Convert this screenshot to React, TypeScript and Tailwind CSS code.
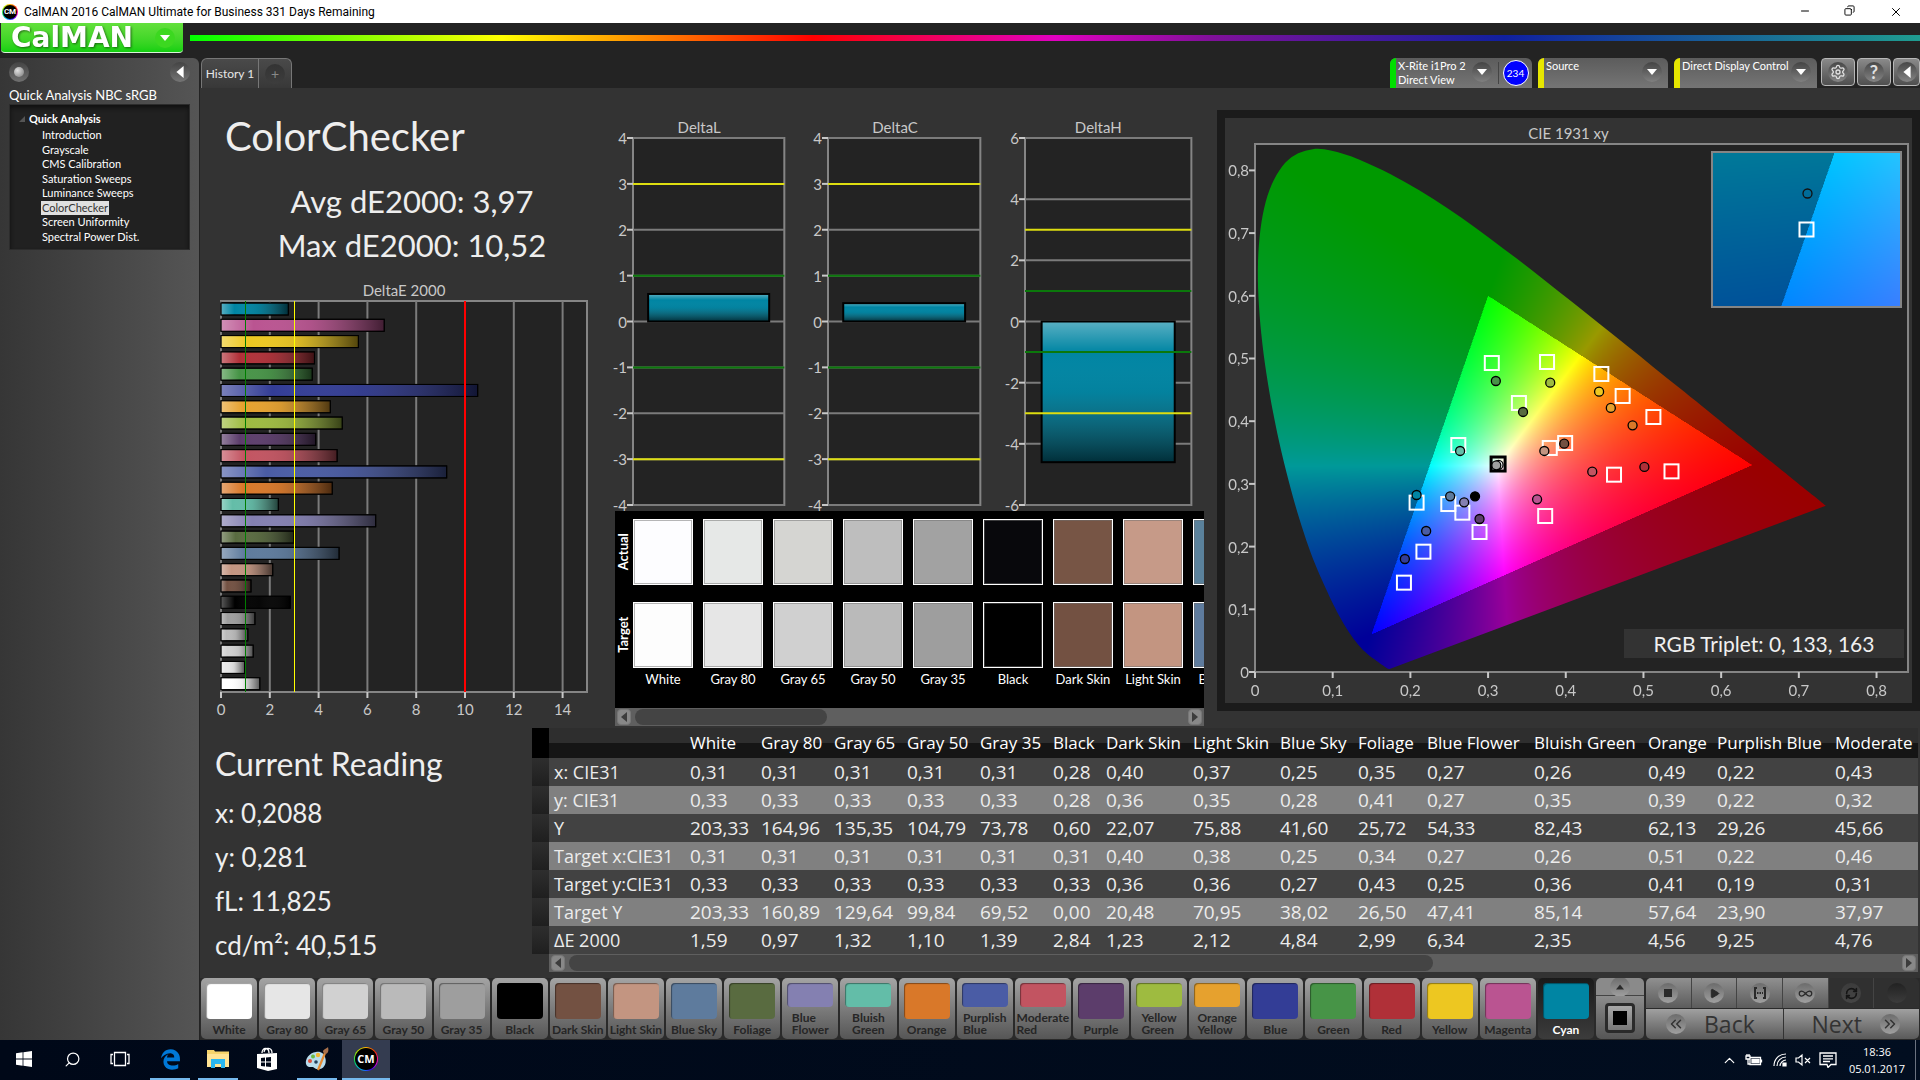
import { useEffect, useRef } from "react";
import type { ReactNode } from "react";
import {
  Settings,
  Play,
  Infinity as InfinityIcon,
  RefreshCw,
  ChevronsLeft,
  ChevronsRight,
  Search,
  Minus,
  Copy,
  X,
  ChevronUp,
} from "lucide-react";
import { FaEdgeLegacy } from "react-icons/fa6";

/* ---------- data ---------- */

type Patch = { name: string; lines?: string[]; color: string; de: number };

const patches: Patch[] = [
  { name: "White", color: "#ffffff", de: 1.59 },
  { name: "Gray 80", color: "#e6e6e6", de: 0.97 },
  { name: "Gray 65", color: "#d1d1d1", de: 1.32 },
  { name: "Gray 50", color: "#bababa", de: 1.1 },
  { name: "Gray 35", color: "#9e9e9e", de: 1.39 },
  { name: "Black", color: "#000000", de: 2.84 },
  { name: "Dark Skin", color: "#735142", de: 1.23 },
  { name: "Light Skin", color: "#c39581", de: 2.12 },
  { name: "Blue Sky", color: "#5e7b9d", de: 4.84 },
  { name: "Foliage", color: "#596b40", de: 2.99 },
  { name: "Blue Flower", lines: ["Blue", "Flower"], color: "#8480b1", de: 6.34 },
  { name: "Bluish Green", lines: ["Bluish", "Green"], color: "#63bda8", de: 2.35 },
  { name: "Orange", color: "#d97829", de: 4.56 },
  { name: "Purplish Blue", lines: ["Purplish", "Blue"], color: "#4a5ca5", de: 9.25 },
  { name: "Moderate Red", lines: ["Moderate", "Red"], color: "#c25461", de: 4.76 },
  { name: "Purple", color: "#5c3d6b", de: 3.88 },
  { name: "Yellow Green", lines: ["Yellow", "Green"], color: "#9ebb40", de: 4.97 },
  { name: "Orange Yellow", lines: ["Orange", "Yellow"], color: "#e6a12e", de: 4.48 },
  { name: "Blue", color: "#333d96", de: 10.52 },
  { name: "Green", color: "#479447", de: 3.74 },
  { name: "Red", color: "#b03038", de: 3.83 },
  { name: "Yellow", color: "#edc721", de: 5.63 },
  { name: "Magenta", color: "#ba5491", de: 6.69 },
  { name: "Cyan", color: "#0085a3", de: 2.76 },
];

const pages = [
  "Introduction",
  "Grayscale",
  "CMS Calibration",
  "Saturation Sweeps",
  "Luminance Sweeps",
  "ColorChecker",
  "Screen Uniformity",
  "Spectral Power Dist.",
];

const columns = [
  "White", "Gray 80", "Gray 65", "Gray 50", "Gray 35", "Black", "Dark Skin", "Light Skin",
  "Blue Sky", "Foliage", "Blue Flower", "Bluish Green", "Orange", "Purplish Blue", "Moderate",
];

const rows: [string, string[]][] = [
  ["x: CIE31", ["0,31", "0,31", "0,31", "0,31", "0,31", "0,28", "0,40", "0,37", "0,25", "0,35", "0,27", "0,26", "0,49", "0,22", "0,43"]],
  ["y: CIE31", ["0,33", "0,33", "0,33", "0,33", "0,33", "0,28", "0,36", "0,35", "0,28", "0,41", "0,27", "0,35", "0,39", "0,22", "0,32"]],
  ["Y", ["203,33", "164,96", "135,35", "104,79", "73,78", "0,60", "22,07", "75,88", "41,60", "25,72", "54,33", "82,43", "62,13", "29,26", "45,66"]],
  ["Target x:CIE31", ["0,31", "0,31", "0,31", "0,31", "0,31", "0,31", "0,40", "0,38", "0,25", "0,34", "0,27", "0,26", "0,51", "0,22", "0,46"]],
  ["Target y:CIE31", ["0,33", "0,33", "0,33", "0,33", "0,33", "0,33", "0,36", "0,36", "0,27", "0,43", "0,25", "0,36", "0,41", "0,19", "0,31"]],
  ["Target Y", ["203,33", "160,89", "129,64", "99,84", "69,52", "0,00", "20,48", "70,95", "38,02", "26,50", "47,41", "85,14", "57,64", "23,90", "37,97"]],
  ["ΔE 2000", ["1,59", "0,97", "1,32", "1,10", "1,39", "2,84", "1,23", "2,12", "4,84", "2,99", "6,34", "2,35", "4,56", "9,25", "4,76"]],
];

const swatches = [
  { name: "White", actual: "#fdfdff", target: "#fdfdfd" },
  { name: "Gray 80", actual: "#e6e8e7", target: "#e6e6e6" },
  { name: "Gray 65", actual: "#d5d5d2", target: "#d0d0d0" },
  { name: "Gray 50", actual: "#bebebe", target: "#bababa" },
  { name: "Gray 35", actual: "#a2a2a2", target: "#9e9e9e" },
  { name: "Black", actual: "#08080c", target: "#000000" },
  { name: "Dark Skin", actual: "#775545", target: "#735142" },
  { name: "Light Skin", actual: "#c69a88", target: "#c39581" },
  { name: "Blue Sky", actual: "#5a819b", target: "#5e7b9d" },
];

/* CIE 1931 2° spectral locus, x then y */
const locus: [number, number][] = [
  [0.1741, 0.005], [0.1733, 0.0048], [0.1714, 0.0051], [0.1689, 0.0069], [0.1644, 0.0109],
  [0.1566, 0.0177], [0.144, 0.0297], [0.1355, 0.0399], [0.1241, 0.0578], [0.1096, 0.0868],
  [0.0913, 0.1327], [0.0687, 0.2007], [0.0454, 0.295], [0.0235, 0.4127], [0.0082, 0.5384],
  [0.0039, 0.6548], [0.0139, 0.7502], [0.0389, 0.812], [0.0743, 0.8338], [0.1142, 0.8262],
  [0.1547, 0.8059], [0.1929, 0.7816], [0.2296, 0.7543], [0.2658, 0.7243], [0.3016, 0.6923],
  [0.3373, 0.6589], [0.3731, 0.6245], [0.4087, 0.5896], [0.4441, 0.5547], [0.4788, 0.5202],
  [0.5125, 0.4866], [0.5448, 0.4544], [0.5752, 0.4242], [0.6029, 0.3965], [0.627, 0.3725],
  [0.6658, 0.334], [0.6915, 0.3083], [0.7079, 0.292], [0.719, 0.2809], [0.726, 0.274],
  [0.73, 0.27], [0.7347, 0.2653],
];

const targets: [number, number][] = [
  [0.3048, 0.4928], [0.3759, 0.4944], [0.4458, 0.4753], [0.4732, 0.4402], [0.5128, 0.4067],
  [0.3397, 0.429], [0.2617, 0.362], [0.3794, 0.3573], [0.3992, 0.3652], [0.4621, 0.3147],
  [0.5361, 0.32], [0.208, 0.2701], [0.2488, 0.2679], [0.2669, 0.2541], [0.3735, 0.2488],
  [0.289, 0.2233], [0.2168, 0.1919], [0.1917, 0.1425],
];

const readings: [number, number, string][] = [
  [0.31, 0.4641, "#479447"], [0.38, 0.4615, "#9ebb40"], [0.4429, 0.4471, "#edc721"],
  [0.458, 0.4211, "#e6a12e"], [0.486, 0.3934, "#d97829"], [0.345, 0.4147, "#596b40"],
  [0.264, 0.3525, "#63bda8"], [0.3724, 0.3525, "#c39581"], [0.398, 0.3642, "#735142"],
  [0.3135, 0.3305, "#ffffff"], [0.3106, 0.3296, "#a0a0a0"], [0.4341, 0.3195, "#c25461"],
  [0.5012, 0.327, "#b03038"], [0.208, 0.2823, "#0085a3"], [0.2512, 0.2802, "#5e7b9d"],
  [0.2692, 0.2706, "#8480b1"], [0.2832, 0.2802, "#000000"], [0.3631, 0.2754, "#ba5491"],
  [0.289, 0.244, "#5c3d6b"], [0.2203, 0.2249, "#4a5ca5"], [0.1929, 0.1802, "#333d96"],
];

/* ---------- chromaticity fill ---------- */

const side = (ax: number, ay: number, bx: number, by: number, x: number, y: number) =>
  (bx - ax) * (y - ay) - (by - ay) * (x - ax);

function insideSRGB(x: number, y: number) {
  return (
    side(0.64, 0.33, 0.3, 0.6, x, y) >= 0 &&
    side(0.3, 0.6, 0.15, 0.06, x, y) >= 0 &&
    side(0.15, 0.06, 0.64, 0.33, x, y) >= 0
  );
}

function xyToRgb(x: number, y: number) {
  const z = 1 - x - y;
  const lin = [
    3.2406 * x - 1.5372 * y - 0.4986 * z,
    -0.9689 * x + 1.8758 * y + 0.0415 * z,
    0.0557 * x - 0.204 * y + 1.057 * z,
  ].map((v) => Math.max(0, v));
  const max = Math.max(...lin, 0.0001);
  const gain = insideSRGB(x, y) ? 255 : 153;
  return lin.map((v) => (v / max) * gain);
}

type Range = { x0: number; x1: number; y0: number; y1: number };

function Chromaticity({ range, clip }: { range: Range; clip: boolean }) {
  const ref = useRef<HTMLCanvasElement>(null);
  useEffect(() => {
    const canvas = ref.current;
    const ctx = canvas?.getContext("2d");
    if (!canvas || !ctx) return;
    const w = (canvas.width = canvas.clientWidth);
    const h = (canvas.height = canvas.clientHeight);
    const { x0, x1, y0, y1 } = range;
    const img = ctx.createImageData(w, h);
    for (let j = 0; j < h; j++) {
      for (let i = 0; i < w; i++) {
        const sum = [0, 0, 0];
        for (const o of [0.25, 0.75]) {
          const c = xyToRgb(x0 + ((i + o) / w) * (x1 - x0), y1 - ((j + 0.5) / h) * (y1 - y0));
          for (let k = 0; k < 3; k++) sum[k] += c[k] / 2;
        }
        const p = (j * w + i) * 4;
        img.data[p] = sum[0];
        img.data[p + 1] = sum[1];
        img.data[p + 2] = sum[2];
        img.data[p + 3] = 255;
      }
    }
    ctx.putImageData(img, 0, 0);
    if (!clip) return;
    const pt = (k: number) => {
      const [x, y] = locus[Math.min(Math.max(k, 0), locus.length - 1)];
      return [((x - x0) / (x1 - x0)) * w, ((y1 - y) / (y1 - y0)) * h];
    };
    ctx.globalCompositeOperation = "destination-in";
    ctx.beginPath();
    ctx.moveTo(pt(0)[0], pt(0)[1]);
    for (let k = 0; k < locus.length - 1; k++) {
      const [a, b, c, d] = [pt(k - 1), pt(k), pt(k + 1), pt(k + 2)];
      ctx.bezierCurveTo(
        b[0] + (c[0] - a[0]) / 6, b[1] + (c[1] - a[1]) / 6,
        c[0] - (d[0] - b[0]) / 6, c[1] - (d[1] - b[1]) / 6,
        c[0], c[1],
      );
    }
    ctx.closePath();
    ctx.fill();
  }, [range, clip]);
  return <canvas ref={ref} className="absolute inset-0 h-full w-full" />;
}

const cieRange: Range = { x0: 0, x1: 0.8405, y0: 0, y1: 0.8421 };
const insetRange: Range = { x0: 0.1836, x1: 0.2324, y0: 0.2452, y1: 0.295 };

/* ---------- charts ---------- */

const label = "fill-[#c8c8c8] font-['Lato',sans-serif] text-[15px]";

function DeltaEChart() {
  const bars = [...patches].reverse();
  return (
    <figure className="mt-3.5 mr-[27px] ml-[21px]">
      <figcaption className="text-center text-[15px] leading-[18px] text-[#c8c8c8]">DeltaE 2000</figcaption>
      <svg className="mt-0.5 block h-[391px] w-full overflow-visible" role="img" aria-label="DeltaE 2000 per patch">
        <defs>
          <linearGradient id="shadeX">
            <stop offset="0" stopColor="#fff" stopOpacity="0.35" />
            <stop offset="0.2" stopColor="#fff" stopOpacity="0" />
            <stop offset="0.55" stopColor="#444" stopOpacity="0.1" />
            <stop offset="1" stopColor="#000" stopOpacity="0.65" />
          </linearGradient>
        </defs>
        <rect width="100%" height="100%" fill="#232323" stroke="#858585" strokeWidth="2" />
        {[0, 2, 4, 6, 8, 10, 12, 14].map((v) => {
          const x = `${(v / 15) * 100}%`;
          return (
            <g key={v}>
              <line x1={x} x2={x} y1="0" y2="100%" stroke="#7b7b7b" strokeWidth="2" />
              <svg x={x} y="100%" className="overflow-visible">
                <line y1="0" y2="6" stroke="#c8c8c8" strokeWidth="2" />
                <text y="23" textAnchor="middle" className={label}>{v}</text>
              </svg>
            </g>
          );
        })}
        {bars.map((p, i) => (
          <svg key={p.name} y={`${(i / 24) * 100}%`} width={`${(p.de / 15) * 100}%`} className="overflow-visible">
            <rect y="2" width="100%" height="12" fill={p.color} stroke="#000" />
            <rect y="2" width="100%" height="12" fill="url(#shadeX)" stroke="#000" />
          </svg>
        ))}
        <g shapeRendering="crispEdges">
          <line x1="6.667%" x2="6.667%" y1="0" y2="100%" stroke="#007d00" />
          <line x1="20%" x2="20%" y1="0" y2="100%" stroke="#ffff00" />
          <line x1="66.667%" x2="66.667%" y1="0" y2="100%" stroke="#ff0000" strokeWidth="2" />
        </g>
      </svg>
    </figure>
  );
}

function DeltaChart({ title, max, step, value }: { title: string; max: number; step: number; value: number }) {
  const pos = (v: number) => `${((max - v) / (2 * max)) * 100}%`;
  const ticks = Array.from({ length: (2 * max) / step + 1 }, (_, i) => max - i * step);
  const top = Math.max(value, 0);
  return (
    <figure>
      <figcaption className="text-center text-[15px] leading-[18px] text-[#c8c8c8]">{title}</figcaption>
      <div className="mt-0.5 pl-[19px]">
        <svg className="block h-[367px] w-full overflow-visible" role="img" aria-label={title}>
          <defs>
            <linearGradient id={`shade${title}`} x1="0" x2="0" y1="0" y2="1">
              <stop offset="0" stopColor="#fff" stopOpacity="0.35" />
              <stop offset="0.22" stopColor="#fff" stopOpacity="0" />
              <stop offset="0.5" stopColor="#444" stopOpacity="0.05" />
              <stop offset="1" stopColor="#000" stopOpacity="0.65" />
            </linearGradient>
          </defs>
          <rect width="100%" height="100%" fill="#232323" stroke="#858585" strokeWidth="2" />
          {ticks.map((v) => (
            <g key={v}>
              <line x1="0" x2="100%" y1={pos(v)} y2={pos(v)} stroke="#7b7b7b" strokeWidth="2" />
              <svg y={pos(v)} className="overflow-visible">
                <line x1="-6" x2="0" y1="0" y2="0" stroke="#c8c8c8" strokeWidth="2" />
                <text x="-6" y="6" textAnchor="end" className={label}>{v}</text>
              </svg>
            </g>
          ))}
          <svg x="10%" y={pos(top)} width="80%" height={`${(Math.abs(value) / (2 * max)) * 100}%`} className="overflow-visible">
            <rect width="100%" height="100%" fill="#0085a3" />
            <rect width="100%" height="100%" fill={`url(#shade${title})`} stroke="#000" strokeWidth="2" />
          </svg>
          {[3, 1, -1, -3].map((v) => (
            <line key={v} x1="0" x2="100%" y1={pos(v)} y2={pos(v)} stroke={Math.abs(v) === 3 ? "#dede10" : "#0b780b"} strokeWidth="2" />
          ))}
        </svg>
      </div>
    </figure>
  );
}

function CieChart() {
  const px = (v: number) => `${(v / cieRange.x1) * 100}%`;
  const py = (v: number) => `${100 - (v / cieRange.y1) * 100}%`;
  const ticks = [0, 1, 2, 3, 4, 5, 6, 7, 8];
  const text = (t: number) => (t === 0 ? "0" : `0,${t}`);
  return (
    <figure className="mt-[22px] ml-[13px] h-[601px] border-8 border-[#1b1b1b] bg-[#333333]">
      <figcaption className="pt-1.5 text-center text-[15px] leading-[18px] text-[#c8c8c8]">CIE 1931 xy</figcaption>
      <div className="relative mt-0.5 mr-1 ml-[30px] h-[528px] bg-[#232323]">
        <Chromaticity range={cieRange} clip />
        <svg className="absolute inset-0 h-full w-full overflow-visible" role="img" aria-label="Chromaticity diagram">
          <rect width="100%" height="100%" fill="none" stroke="#858585" strokeWidth="2" />
          {ticks.map((t) => (
            <g key={t}>
              <svg x={px(t / 10)} y="100%" className="overflow-visible">
                <line y1="0" y2="6" stroke="#c8c8c8" strokeWidth="2" />
                <text y="24" textAnchor="middle" className={label}>{text(t)}</text>
              </svg>
              <svg y={py(t / 10)} className="overflow-visible">
                <line x1="-6" x2="0" y1="0" y2="0" stroke="#c8c8c8" strokeWidth="2" />
                <text x="-6" y="6" textAnchor="end" className={label}>{text(t)}</text>
              </svg>
            </g>
          ))}
          {targets.map(([x, y]) => (
            <svg key={`${x}-${y}`} x={px(x)} y={py(y)} className="overflow-visible">
              <rect x="-7" y="-7" width="14" height="14" fill="none" stroke="#fff" strokeWidth="2" />
            </svg>
          ))}
          <svg x={px(0.3129)} y={py(0.3317)} className="overflow-visible">
            <rect x="-7" y="-7" width="14" height="14" fill="none" stroke="#000" strokeWidth="3" />
          </svg>
          {readings.map(([x, y, c]) => (
            <svg key={`${x}-${y}`} x={px(x)} y={py(y)} className="overflow-visible">
              <circle r="4.5" fill={c} stroke="#000" strokeWidth="1.3" />
            </svg>
          ))}
        </svg>
        <div className="absolute top-[7px] right-1.5 h-[157px] w-[191px] border-2 border-[#858585]">
          <Chromaticity range={insetRange} clip={false} />
          <svg className="absolute inset-0 h-full w-full" role="img" aria-label="Selected point detail">
            <svg x="50%" y="50%" className="overflow-visible">
              <rect x="-7" y="-7" width="14" height="14" fill="none" stroke="#fff" strokeWidth="2" />
              <circle cx="1" cy="-36" r="4.5" fill="none" stroke="#111" strokeWidth="1.3" />
            </svg>
          </svg>
        </div>
        <div className="absolute right-1 bottom-3.5 w-[280px] bg-[#333333] text-center text-[21px] leading-[29px] text-[#f0f0f0]">
          RGB Triplet: 0, 133, 163
        </div>
      </div>
    </figure>
  );
}

/* ---------- small parts ---------- */

const Triangle = ({ dir, className }: { dir: "left" | "right" | "up" | "down"; className: string }) => {
  const d = { left: "M8 0 2 5l6 5z", right: "M2 0l6 5-6 5z", up: "M0 8l5-6 5 6z", down: "M0 2h10L5 8z" }[dir];
  return (
    <svg viewBox="0 0 10 10" className={className} fill="currentColor" aria-hidden="true">
      <path d={d} />
    </svg>
  );
};

function ScrollBar({ thumb }: { thumb: ReactNode }) {
  const btn =
    "flex h-4 w-3.5 shrink-0 items-center justify-center rounded border border-[#777] bg-[#888] text-[#3c3c3c]";
  return (
    <div className="flex h-[18px] items-center gap-1 bg-[#5f5f5f] px-0.5">
      <button type="button" aria-label="Scroll left" className={btn}>
        <Triangle dir="left" className="h-3 w-2.5" />
      </button>
      <div className="flex-1">{thumb}</div>
      <button type="button" aria-label="Scroll right" className={btn}>
        <Triangle dir="right" className="h-3 w-2.5" />
      </button>
    </div>
  );
}

const Knob = ({ children, className = "" }: { children?: ReactNode; className?: string }) => (
  <span className={`flex h-5 w-5 items-center justify-center rounded-full bg-linear-to-b ${className}`}>{children}</span>
);

const CmLogo = ({ className }: { className: string }) => (
  <span
    className={`flex items-center justify-center rounded-full bg-[conic-gradient(#ffb400,#ff2a00,#ff00c8,#3a00ff,#00b4ff,#00e060,#b4f000,#ffb400)] p-px ${className}`}
  >
    <span className="flex h-full w-full items-center justify-center rounded-full bg-black font-bold text-white">
      CM
    </span>
  </span>
);

/* ---------- sections ---------- */

function TitleBar() {
  return (
    <header className="flex h-[23px] items-center bg-white font-['Roboto',sans-serif] text-black">
      <CmLogo className="ml-0.5 h-4 w-4 text-[8px]" />
      <h1 className="ml-1.5 text-[12px]">CalMAN 2016 CalMAN Ultimate for Business 331 Days Remaining</h1>
      <div className="ml-auto flex">
        <button type="button" aria-label="Minimize" className="flex w-[45px] justify-center">
          <Minus size={12} strokeWidth={2} />
        </button>
        <button type="button" aria-label="Restore" className="flex w-[45px] justify-center">
          <Copy size={11} strokeWidth={2} className="rotate-90" />
        </button>
        <button type="button" aria-label="Close" className="flex w-[48px] justify-center">
          <X size={14} strokeWidth={1.7} />
        </button>
      </div>
    </header>
  );
}

function Brand() {
  return (
    <div className="flex h-[31px]">
      <button
        type="button"
        className="ml-px flex h-[30px] w-[182px] items-center justify-between rounded-b border-b border-[#d8f5d8] bg-linear-to-b from-[#63e03c] to-[#10d010] pr-2 pl-2.5"
      >
        <span className="font-['DejaVu_Sans',sans-serif] text-[28px] leading-7 font-bold text-white drop-shadow-[1px_1px_1px_rgba(0,0,0,0.5)]">
          CalMAN
        </span>
        <span className="flex h-5 w-5 items-center justify-center rounded-full bg-[#3cd820] text-white">
          <Triangle dir="down" className="h-2.5 w-2.5" />
        </span>
      </button>
      <div className="mt-3 ml-[7px] h-1.5 flex-1 bg-[linear-gradient(to_right,#00ff00,#ffff00_18%,#ff0000_36%,#e000c0_50%,#80109a_59%,#10209f_76%,#1f9c90_100%)]" />
    </div>
  );
}

function Device({ name, mode, strip, wide, children }: { name: string; mode?: string; strip: string; wide: string; children?: ReactNode }) {
  return (
    <div className={`flex h-[30px] overflow-hidden rounded-t-md bg-linear-to-b from-[#5c5c5c] to-[#757575] ${wide}`}>
      <span className={`w-1.5 shrink-0 ${strip}`} />
      <button type="button" aria-haspopup="menu" className="flex min-w-0 flex-1 items-start justify-between pr-1.5 pl-0.5 text-left">
        <span className="pt-px text-[11px] leading-[14px] whitespace-nowrap text-white">
          {name}
          {mode && (
            <>
              <br />
              {mode}
            </>
          )}
        </span>
        <Knob className="mt-1 from-[#444] to-[#808080] text-white">
          <Triangle dir="down" className="h-2.5 w-2.5" />
        </Knob>
      </button>
      {children}
    </div>
  );
}

function Toolbar() {
  const square =
    "flex h-7 items-center justify-center rounded border border-[#b8b8b8] bg-linear-to-b from-[#8a8a8a] to-[#4f4f4f] text-[#e0e0e0]";
  const knob = "from-[#484848] to-[#858585]";
  return (
    <div className="flex h-[30px] gap-1.5 pl-[2px]">
      <div role="tablist" className="flex h-[30px] overflow-hidden rounded-t-md border border-b-0 border-[#777] bg-linear-to-b from-[#4a4a4a] to-[#383838]">
        <button type="button" role="tab" aria-selected="true" className="w-[57px] border-r border-[#777] text-[12px] text-[#e6e6e6]">
          History 1
        </button>
        <button type="button" aria-label="Add tab" className="flex w-8 items-center justify-center text-sm text-[#888]">
          <Knob className="from-[#333] to-[#3d3d3d]">+</Knob>
        </button>
      </div>
      <div className="ml-auto flex gap-1.5">
        <Device name="X-Rite i1Pro 2" mode="Direct View" strip="bg-[#00e000]" wide="w-[142px]">
          <div className="my-1 flex w-[34px] items-center justify-center border-l border-[#444]">
            <span className="flex h-[26px] w-[26px] items-center justify-center rounded-full border border-white bg-[#0000ff] text-[10px] text-white">
              234
            </span>
          </div>
        </Device>
        <Device name="Source" strip="bg-[#e6e600]" wide="w-[130px]" />
        <Device name="Direct Display Control" strip="bg-[#e6e600]" wide="w-[143px]" />
      </div>
      <div className="-ml-0.5 flex gap-0.5">
        <button type="button" aria-label="Settings" className={`w-[34px] ${square}`}>
          <Knob className={knob}><Settings size={16} /></Knob>
        </button>
        <button type="button" aria-label="Help" className={`w-[34px] text-lg font-bold ${square}`}>
          <Knob className={knob}>?</Knob>
        </button>
        <button type="button" aria-label="Collapse" className={`w-[27px] ${square}`}>
          <Knob className={knob}><Triangle dir="left" className="h-3 w-3 text-white" /></Knob>
        </button>
      </div>
    </div>
  );
}

function Sidebar() {
  return (
    <aside className="w-[199px] shrink-0 rounded-tr-md bg-linear-to-r from-[#363636] to-[#555555] px-[9px] pt-1">
      <div className="flex justify-between">
        <button type="button" aria-label="Record">
          <Knob className="from-[#444] to-[#707070]">
            <span className="h-2.5 w-2.5 rounded-full bg-[radial-gradient(circle_at_35%_35%,#e0e0e0,#777)]" />
          </Knob>
        </button>
        <button type="button" aria-label="Hide sidebar">
          <Knob className="from-[#444] to-[#757575] text-white">
            <Triangle dir="left" className="h-3 w-3" />
          </Knob>
        </button>
      </div>
      <h2 className="mt-1 text-[13px] leading-[18px] whitespace-nowrap text-white">Quick Analysis NBC sRGB</h2>
      <nav aria-label="Workflow" className="h-[146px] border border-[#2c2c2c] bg-[#212121] pt-[7px] pl-[19px] text-[11px] text-white shadow-[inset_0_3px_4px_#111]">
        <div className="relative leading-[14px] font-bold">
          <svg viewBox="0 0 6 6" className="absolute top-1 -left-2.5 h-1.5 w-1.5 fill-[#555]" aria-hidden="true">
            <path d="M6 0v6H0z" />
          </svg>
          Quick Analysis
        </div>
        <ul className="mt-0.5 flex h-[116px] flex-col justify-between pl-3 leading-[14px]">
          {pages.map((p) => (
            <li key={p} className="flex">
              <a href="#" className={p === "ColorChecker" ? "bg-[#e0e0e0] px-px text-[#333]" : "px-px"}>{p}</a>
            </li>
          ))}
        </ul>
      </nav>
    </aside>
  );
}

function SwatchPanel() {
  const box = "h-[66px] w-[60px] border border-white shadow-[inset_0_0_0_1px_rgba(110,110,110,0.5)]";
  const side = "flex h-[66px] w-[18px] items-center justify-center text-[13px] font-bold text-white";
  return (
    <section aria-label="Actual and target colours" className="relative mt-1.5 ml-px bg-black">
      <div className="flex h-[197px] overflow-hidden pt-2">
        <div className="flex shrink-0 flex-col gap-[17px]">
          <div className={side}><span className="-rotate-90">Actual</span></div>
          <div className={side}><span className="-rotate-90">Target</span></div>
        </div>
        <div className="flex gap-2.5">
          {swatches.map((s) => (
            <div key={s.name} className="flex w-[60px] shrink-0 flex-col items-center">
              <div className={box} style={{ backgroundColor: s.actual }} />
              <div className={`mt-[17px] ${box}`} style={{ backgroundColor: s.target }} />
              <span className="mt-0.5 text-[13px] leading-[18px] whitespace-nowrap text-white">{s.name}</span>
            </div>
          ))}
        </div>
      </div>
      <ScrollBar thumb={<div className="h-4 w-[35%] rounded-lg bg-[#444]" />} />
    </section>
  );
}

function Reading() {
  return (
    <section className="w-[332px] shrink-0 pt-4 pl-[15px] text-[#eeeeee]">
      <h2 className="text-[32px] leading-[40px]">Current Reading</h2>
      <div className="mt-[7px] text-[26px] leading-[44px]">
        <p>x: 0,2088</p>
        <p>y: 0,281</p>
        <p>fL: 11,825</p>
        <p>cd/m²: 40,515</p>
      </div>
    </section>
  );
}

function DataTable() {
  return (
    <section className="mr-0.5 min-w-0 flex-1 font-['Open_Sans',sans-serif] text-[#ececec]">
      <table className="w-full table-fixed border-collapse text-left whitespace-nowrap">
        <colgroup>
          <col className="w-[17px]" />
          <col className="w-[136px]" />
          <col className="w-[71px]" />
          <col className="w-[73px]" />
          <col className="w-[73px]" />
          <col className="w-[73px]" />
          <col className="w-[73px]" />
          <col className="w-[53px]" />
          <col className="w-[87px]" />
          <col className="w-[87px]" />
          <col className="w-[78px]" />
          <col className="w-[69px]" />
          <col className="w-[107px]" />
          <col className="w-[114px]" />
          <col className="w-[69px]" />
          <col className="w-[118px]" />
          <col />
        </colgroup>
        <thead>
          <tr className="h-[30px] bg-[linear-gradient(#2e2e2e_50%,#151515_50%)] text-[17px] text-white">
            <td className="bg-black" />
            <td />
            {columns.map((c) => (
              <th key={c} scope="col" className="p-0 pl-[5px] leading-[30px] font-normal">{c}</th>
            ))}
          </tr>
        </thead>
        <tbody className="text-[19px]">
          {rows.map(([name, cells], i) => (
            <tr key={name} className={i % 2 ? "h-7 bg-[#808080]" : "h-7 bg-[#424242]"}>
              <td className="bg-linear-to-b from-[#2e2e2e] to-[#1f1f1f] p-0" />
              <th scope="row" className="p-0 pl-[5px] text-[18px] leading-7 font-normal">{name}</th>
              {cells.map((v, k) => (
                <td key={k} className="p-0 pl-[5px] leading-7">{v}</td>
              ))}
            </tr>
          ))}
        </tbody>
      </table>
      <div className="pl-[17px]">
        <ScrollBar thumb={<div className="h-4 w-[65%] rounded-lg bg-[#444]" />} />
      </div>
    </section>
  );
}

function PatchBar() {
  const pad = "flex flex-1 items-center justify-center border-r border-[#444] last:border-r-0 text-[#2a2a2a]";
  const face = "bg-linear-to-b from-[#909090] to-[#5c5c5c]";
  const off = "bg-[#303030]";
  const round = "from-[#6c6c6c] to-[#a0a0a0]";
  const wide = "flex flex-1 items-center border-r border-[#333] last:border-r-0 bg-linear-to-b from-[#a0a0a0] to-[#5a5a5a] text-[#333]";
  return (
    <div className="flex h-[62px] gap-0.5 bg-[#2a2a2a] px-px">
      <div className="flex flex-1 gap-0.5">
        {patches.map((p) => {
          const active = p.name === "Cyan";
          return (
            <button
              key={p.name}
              type="button"
              aria-pressed={active}
              className={`flex h-[61px] min-w-0 flex-1 flex-col items-center rounded-[5px] pt-[5px] text-[12px] leading-3 font-bold ${
                active ? "bg-linear-to-b from-[#1a1a1a] to-[#3c3c3c] text-white" : "bg-linear-to-b from-[#a4a4a4] to-[#565656] text-[#262626]"
              }`}
            >
              <span
                className={`w-[46px] rounded shadow-[inset_1px_1px_1px_rgba(0,0,0,0.4)] ${p.lines ? "h-6" : "h-9"}`}
                style={{ backgroundColor: p.color }}
              />
              <span className="mt-[5px] text-left whitespace-pre">{p.lines ? p.lines.join("\n") : p.name}</span>
            </button>
          );
        })}
      </div>
      <div className="flex h-[61px] w-12 flex-col overflow-hidden rounded-[5px]">
        <button type="button" aria-label="Expand" className="flex h-[18px] items-center justify-center border-b border-[#444] bg-[#8a8a8a] text-[#2a2a2a]">
          <Knob className="h-4 w-4 from-[#6c6c6c] to-[#a0a0a0]"><Triangle dir="up" className="h-2 w-2" /></Knob>
        </button>
        <button type="button" aria-label="Pattern window" className="flex flex-1 items-center justify-center bg-linear-to-b from-[#8c8c8c] to-[#555]">
          <span className="flex h-[30px] w-[30px] items-center justify-center rounded border-[3px] border-[#2a2a2a] bg-linear-to-b from-[#a8a8a8] to-[#777]">
            <span className="h-3.5 w-3.5 bg-black" />
          </span>
        </button>
      </div>
      <div className="flex h-[61px] w-[273px] flex-col gap-px overflow-hidden rounded-[5px]">
        <div className="flex h-[30px]">
          <button type="button" aria-label="Stop" className={`${pad} ${face}`}>
            <Knob className={round}><span className="h-2 w-2 bg-[#2a2a2a]" /></Knob>
          </button>
          <button type="button" aria-label="Play" className={`${pad} ${face}`}>
            <Knob className={round}><Play size={11} fill="currentColor" /></Knob>
          </button>
          <button type="button" aria-label="Read series" className={`${pad} ${face}`}>
            <Knob className={round}>
              <svg viewBox="0 0 14 12" className="h-3 w-3.5" fill="none" stroke="currentColor" strokeWidth="2" aria-hidden="true">
                <path d="M4 1H2v10h2M10 1h2v10h-2" />
                <path d="M4 6h6" strokeDasharray="1.5 1" />
              </svg>
            </Knob>
          </button>
          <button type="button" aria-label="Continuous" className={`${pad} ${face}`}>
            <Knob className={round}><InfinityIcon size={15} /></Knob>
          </button>
          <button type="button" aria-label="Refresh" disabled className={`${pad} ${off}`}>
            <Knob className="from-[#3c3c3c] to-[#454545] text-[#151515]"><RefreshCw size={13} strokeWidth={3} /></Knob>
          </button>
          <button type="button" aria-label="Idle" disabled className={`${pad} ${off}`}>
            <Knob className="from-[#222] to-[#3c3c3c]" />
          </button>
        </div>
        <div className="flex h-[30px] font-['Open_Sans',sans-serif] text-[23px] leading-none font-medium">
          <button type="button" className={`justify-start gap-[18px] pl-5 ${wide}`}>
            <Knob className={round}><ChevronsLeft size={18} /></Knob>
            Back
          </button>
          <button type="button" className={`justify-end gap-[18px] pr-[19px] ${wide}`}>
            Next
            <Knob className={round}><ChevronsRight size={18} /></Knob>
          </button>
        </div>
      </div>
    </div>
  );
}

function Taskbar() {
  const item = "flex h-10 shrink-0 items-center justify-center border-b-2";
  const idle = "w-12 border-transparent";
  const open = "w-10 border-[#76b9ed]";
  return (
    <footer className="flex h-10 items-center bg-linear-to-r from-[#000818] to-[#020e20] font-['Open_Sans',sans-serif] text-white">
      <button type="button" aria-label="Start" className={`${item} ${idle}`}>
        <svg viewBox="0 0 16 16" className="h-4 w-4 fill-white"><path d="M0 2.2 6.6 1.3v6.3H0zM7.4 1.2 16 0v7.6H7.4zM0 8.4h6.6v6.3L0 13.8zM7.4 8.4H16V16l-8.600-1.200z" /></svg>
      </button>
      <button type="button" aria-label="Search" className={`${item} ${idle}`}>
        <Search size={17} strokeWidth={1.7} className="-scale-x-100" />
      </button>
      <button type="button" aria-label="Task view" className={`${item} ${idle}`}>
        <svg viewBox="0 0 20 16" className="h-4 w-5" fill="none" stroke="#fff" strokeWidth="1.3"><path d="M4.500 1.500h11v13h-11zM3 3.500H1v9h2M17 3.500h2v9h-2" /></svg>
      </button>
      <button type="button" aria-label="Edge" className={`${item} ml-1.5 ${open}`}>
        <FaEdgeLegacy size={21} color="#0078d7" />
      </button>
      <button type="button" aria-label="File Explorer" className={`${item} ml-2 ${open}`}>
        <svg viewBox="0 0 22 20" className="h-5 w-[22px]">
          <path d="M0 1h7l1 1.500h14V18H0z" fill="#f5d36b" />
          <path d="M0 5h22v13H0z" fill="#ffe394" />
          <path d="M4 19v-9h14v9h-4v-4H8v4z" fill="#29b6f0" />
        </svg>
      </button>
      <button type="button" aria-label="Store" className={`${item} ml-[5px] ${idle}`}>
        <svg viewBox="0 0 22 24" className="h-6 w-[22px]">
          <path d="M1 7 21 6v16L12 24 1 21z" fill="#fff" />
          <path d="M6 6c0-6 7-6 7 0M8 5c1-5 8-5 8 1" fill="none" stroke="#fff" strokeWidth="1.300" />
          <path d="M5 11l4-.4v4H5zM10 10.500l5-.5v4.600h-5zM5 15.400h4v4l-4-.4zM10 15.400h5V20l-5-.5z" fill="#000818" />
        </svg>
      </button>
      <button type="button" aria-label="Paint" className={`${item} ml-1.5 ${open}`}>
        <svg viewBox="0 0 24 24" className="h-6 w-6">
          <path d="M11 5C4 6 0 12 1 17c1 4 5 3 7 3 2 1 3 3 7 2 5-1 7-7 5-12-1-3-4-6-9-5z" fill="#b9dcec" />
          <circle cx="5" cy="14" r="2" fill="#e0503c" />
          <circle cx="8" cy="9.500" r="2" fill="#6bbb45" />
          <circle cx="13" cy="8" r="2.200" fill="#f2b632" />
          <circle cx="11" cy="15" r="1.800" fill="#22405c" />
          <path d="M20 6 13 23" stroke="#e58b34" strokeWidth="2.200" />
          <path d="M18 5c0-3 3-3 5-5 1 4 0 7-3 7z" fill="#a9714b" />
        </svg>
      </button>
      <button type="button" aria-label="CalMAN" className={`${item} ml-[5px] w-12 border-[#76b9ed] bg-[#343c50]`}>
        <CmLogo className="h-6 w-6 text-[11px]" />
      </button>
      <div className="ml-auto flex items-center">
        <ChevronUp size={17} strokeWidth={1.700} />
        <svg viewBox="0 0 18 14" className="ml-[7px] h-3.5 w-[18px]" fill="none" stroke="#fff" strokeWidth="1.300">
          <path d="M5 4.500h10.500v7H5zM16.500 6.500v3M1 3h4v3H1zM2 1v2M4 1v2M3 6v5h2" />
          <path d="M7 6.500h7v3H7z" fill="#fff" />
        </svg>
        <svg viewBox="0 0 14 14" className="ml-2.5 h-3.5 w-3.5" fill="none" stroke="#fff" strokeWidth="1.200">
          <path d="M1 13C1 6 6 1 13 1M4 13c0-5 4-9 9-9M7 13c0-3 3-6 6-6" />
          <path d="M10 10h3v3h-3z" fill="#fff" />
        </svg>
        <svg viewBox="0 0 16 14" className="ml-2 h-3.5 w-4" fill="none" stroke="#fff" strokeWidth="1.200">
          <path d="M1 5h2.500L7 2v10L3.500 9H1zM10 5l5 5M15 5l-5 5" />
        </svg>
        <svg viewBox="0 0 18 16" className="ml-2 h-4 w-[18px]" fill="none" stroke="#fff" strokeWidth="1.300">
          <path d="M1 1h16v11.500h-5L9 15.500 8 12.500H1zM4 4h10M4 6.800h10M4 9.500h7" />
        </svg>
        <time className="ml-3 text-center text-[11px] leading-[17px]">
          18:36
          <br />
          05.01.2017
        </time>
        <span className="mr-1 ml-2.5 h-10 w-px bg-[#6b7280]" />
      </div>
    </footer>
  );
}

export default function App() {
  return (
    <div className="flex min-h-screen flex-col overflow-x-hidden bg-[#232323] font-['Lato',sans-serif]">
      <TitleBar />
      <Brand />
      <div className="mt-1 flex flex-1">
        <Sidebar />
        <main className="flex min-w-0 flex-1 flex-col">
          <Toolbar />
          <div className="ml-px flex flex-1 flex-col bg-[#333333]">
            <div className="grid h-[640px] grid-cols-[minmax(0,414fr)_minmax(0,590fr)_minmax(0,716fr)]">
              <section className="text-[#eeeeee]">
                <h2 className="pt-6 pl-[25px] text-[40px] leading-[48px]">ColorChecker</h2>
                <div className="mt-[19px] pl-2.5 text-center text-[31px] leading-[44px]">
                  <p>Avg dE2000: 3,97</p>
                  <p>Max dE2000: 10,52</p>
                </div>
                <DeltaEChart />
              </section>
              <section className="pt-[30px]">
                <div className="grid grid-cols-[170fr_171fr_185fr] gap-x-[25px] pr-[13px]">
                  <DeltaChart title="DeltaL" max={4} step={1} value={0.6} />
                  <DeltaChart title="DeltaC" max={4} step={1} value={0.4} />
                  <DeltaChart title="DeltaH" max={6} step={2} value={-4.6} />
                </div>
                <SwatchPanel />
              </section>
              <CieChart />
            </div>
            <div className="flex flex-1">
              <Reading />
              <DataTable />
            </div>
            <PatchBar />
          </div>
        </main>
      </div>
      <Taskbar />
    </div>
  );
}
